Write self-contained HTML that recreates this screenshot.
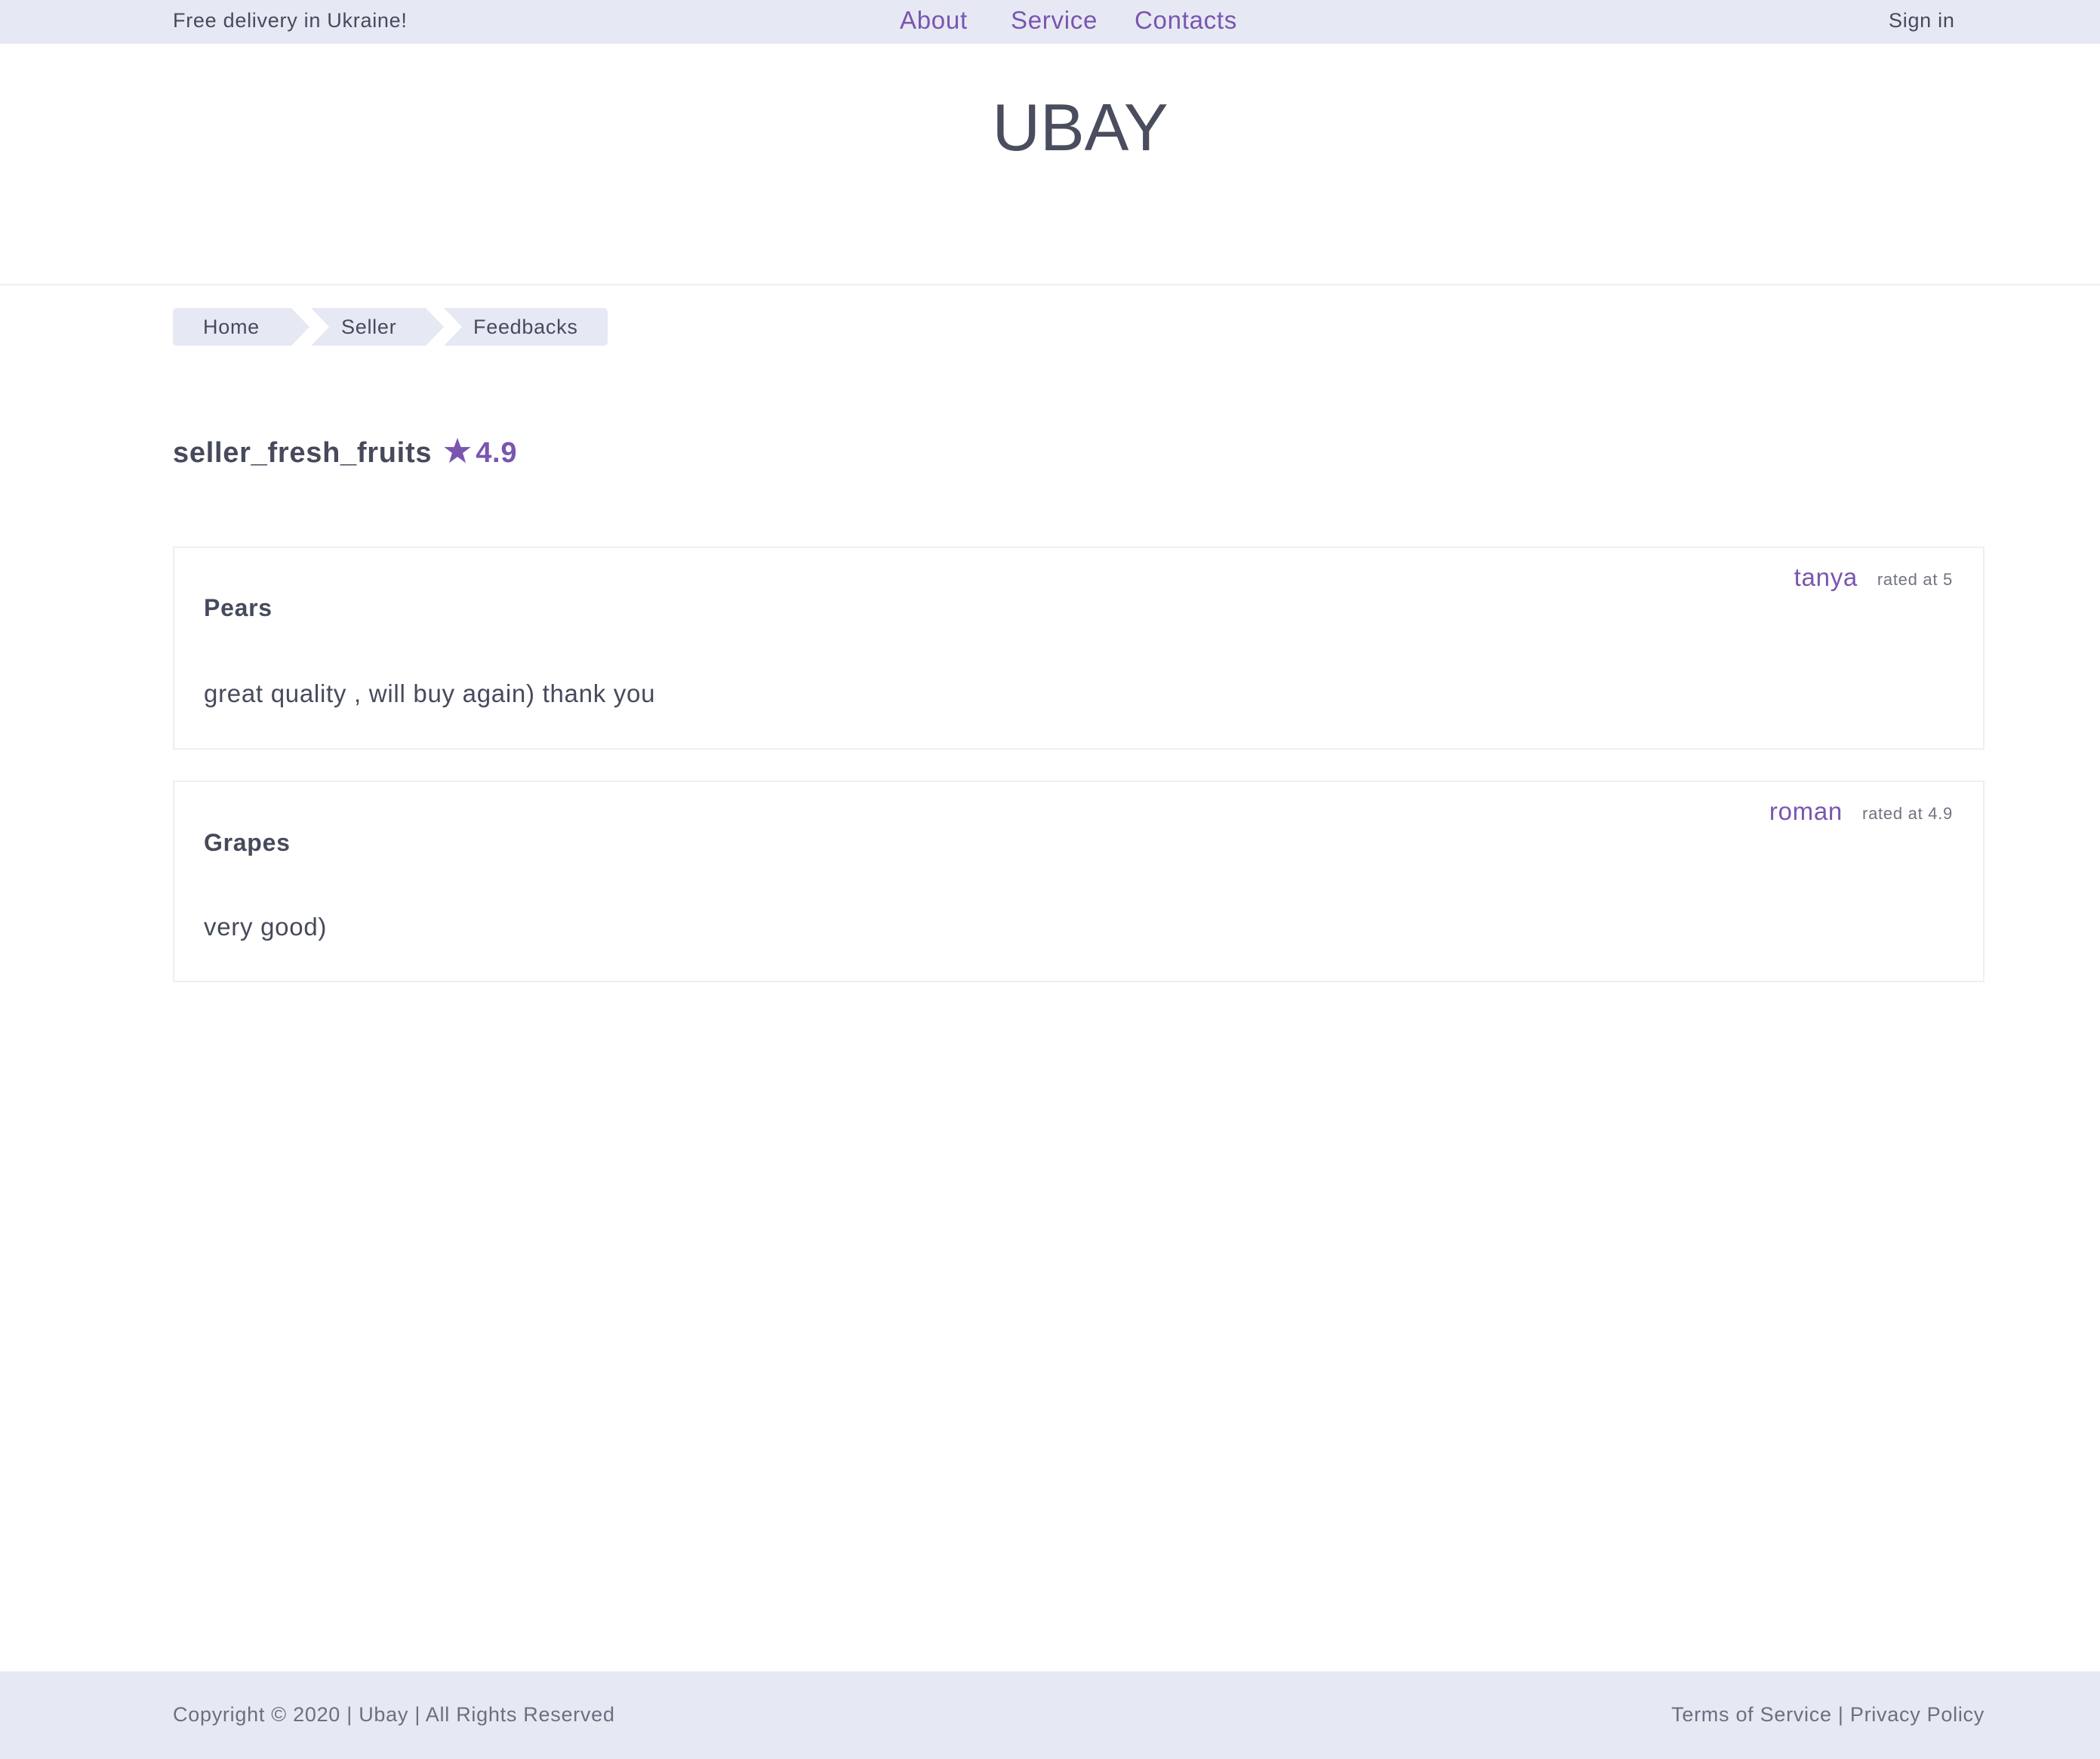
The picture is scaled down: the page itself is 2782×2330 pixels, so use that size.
<!DOCTYPE html>
<html><head><meta charset="utf-8"><style>
*{margin:0;padding:0;box-sizing:border-box}
body{width:2782px;height:2330px;position:relative;background:#fff;font-family:"Liberation Sans",sans-serif;color:#464a5c;overflow:hidden;letter-spacing:0.045em}
.a{position:absolute;white-space:nowrap;line-height:1}
.top{position:absolute;left:0;top:0;width:2782px;height:58px;background:#e6e9f4}
.p{color:#7a55b0}
.hr{position:absolute;left:0;top:376px;width:2782px;height:2px;background:#eeeff2}
.card{position:absolute;left:229px;width:2400px;border:2px solid #eeeff0;background:#fff}
.foot{position:absolute;left:0;top:2214px;width:2782px;height:116px;background:#e6e9f4}
</style></head><body>
<div class="top"></div>
<div class="a" style="left:229px;top:14px;font-size:27px">Free delivery in Ukraine!</div>
<div class="a p" style="left:1192px;top:10px;font-size:33px">About</div>
<div class="a p" style="left:1339px;top:10px;font-size:33px">Service</div>
<div class="a p" style="left:1503px;top:10px;font-size:33px">Contacts</div>
<div class="a" style="left:2502px;top:14px;font-size:27px">Sign in</div>
<div class="a" style="left:0;width:2862px;text-align:center;top:125px;font-size:88px;color:#4a4d5e;letter-spacing:0">UBAY</div>
<div class="hr"></div>
<svg class="a" style="left:229px;top:408px" width="580" height="50">
<path d="M6 0H157L181 25L157 50H6Q0 50 0 44V6Q0 0 6 0Z" fill="#e6e9f4"/>
<path d="M183 0H335L359 25L335 50H183L207 25Z" fill="#e6e9f4"/>
<path d="M359 0H570Q576 0 576 6V44Q576 50 570 50H359L383 25Z" fill="#e6e9f4"/>
</svg>
<div class="a" style="left:269px;top:420px;font-size:27px">Home</div>
<div class="a" style="left:452px;top:420px;font-size:27px">Seller</div>
<div class="a" style="left:627px;top:420px;font-size:27px">Feedbacks</div>
<div class="a" style="left:229px;top:580px;font-size:38px;font-weight:bold">seller_fresh_fruits<svg style="margin-left:16px;vertical-align:-2px" width="36" height="34" viewBox="0 0 24 23"><path d="M12 0L15 8.2H24L16.8 13.5L19.5 22.5L12 17L4.5 22.5L7.2 13.5L0 8.2H9Z" fill="#7a55b0"/></svg><span class="p" style="margin-left:6px">4.9</span></div>
<div class="card" style="top:724px;height:269px"></div>
<div class="a" style="left:270px;top:789px;font-size:32px;font-weight:bold">Pears</div>
<div class="a" style="left:270px;top:902px;font-size:33px">great quality , will buy again) thank you</div>
<div class="a p" style="right:321px;top:748px;font-size:33px">tanya</div>
<div class="a" style="right:195px;top:757px;font-size:22px;color:#70747f">rated at 5</div>
<div class="card" style="top:1034px;height:267px"></div>
<div class="a" style="left:270px;top:1100px;font-size:32px;font-weight:bold">Grapes</div>
<div class="a" style="left:270px;top:1211px;font-size:33px">very good)</div>
<div class="a p" style="right:341px;top:1058px;font-size:33px">roman</div>
<div class="a" style="right:195px;top:1067px;font-size:22px;color:#70747f">rated at 4.9</div>
<div class="foot"></div>
<div class="a" style="left:229px;top:2258px;font-size:27px;color:#6b6f80">Copyright © 2020 | Ubay | All Rights Reserved</div>
<div class="a" style="right:153px;top:2258px;font-size:27px;color:#6b6f80">Terms of Service | Privacy Policy</div>
</body></html>
